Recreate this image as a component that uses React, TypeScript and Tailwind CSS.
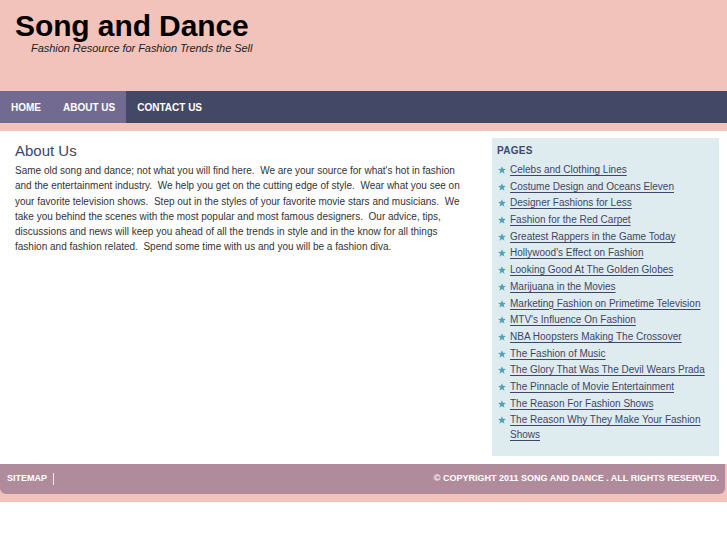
import React from 'react';

const pages = [
  'Celebs and Clothing Lines',
  'Costume Design and Oceans Eleven',
  'Designer Fashions for Less',
  'Fashion for the Red Carpet',
  'Greatest Rappers in the Game Today',
  "Hollywood's Effect on Fashion",
  'Looking Good At The Golden Globes',
  'Marijuana in the Movies',
  'Marketing Fashion on Primetime Television',
  "MTV's Influence On Fashion",
  'NBA Hoopsters Making The Crossover',
  'The Fashion of Music',
  'The Glory That Was The Devil Wears Prada',
  'The Pinnacle of Movie Entertainment',
  'The Reason For Fashion Shows',
  'The Reason Why They Make Your Fashion Shows',
];

const about =
  "Same old song and dance; not what you will find here.\u00a0 We are your source for what's hot in fashion and the entertainment industry.\u00a0 We help you get on the cutting edge of style.\u00a0 Wear what you see on your favorite television shows.\u00a0 Step out in the styles of your favorite movie stars and musicians.\u00a0 We take you behind the scenes with the most popular and most famous designers.\u00a0 Our advice, tips, discussions and news will keep you ahead of all the trends in style and in the know for all things fashion and fashion related.\u00a0 Spend some time with us and you will be a fashion diva.";

function Star() {
  return (
    <svg width="8" height="8" viewBox="0 0 10 10" className="shrink-0 mt-[4px]">
      <path d="M5 0.2 L6.3 3.5 L9.9 3.6 L7.1 5.9 L8.1 9.6 L5 7.5 L1.9 9.6 L2.9 5.9 L0.1 3.6 L3.7 3.5 Z" fill="#4fa3b7" />
    </svg>
  );
}

export default function App() {
  return (
    <div className="w-[727px] min-h-[545px] bg-white font-['Liberation_Sans',Arial,sans-serif]">
      {/* header */}
      <header className="h-[91px] bg-[#f2c3bb] pt-[11px]">
        <h1 className="pl-[15px] text-[30px] leading-none font-bold text-black tracking-[-0.1px]">Song and Dance</h1>
        <p className="pl-[31px] mt-[2px] text-[11px] leading-none italic text-[#222] tracking-[-0.05px]">
          Fashion Resource for Fashion Trends the Sell
        </p>
      </header>

      {/* nav */}
      <nav className="h-[32px] bg-[#434867] flex text-[10px] font-bold text-white">
        <div className="flex bg-[#736a91]">
          <a className="px-[11px] flex items-center">HOME</a>
          <a className="px-[11px] flex items-center">ABOUT US</a>
        </div>
        <a className="px-[11px] flex items-center">CONTACT US</a>
      </nav>
      <div className="h-[8px] bg-[#f2c3bb]" />

      {/* main */}
      <main className="h-[333px] flex">
        <section className="w-[455px] ml-[15px] pt-[11px]">
          <h2 className="text-[15px] leading-[18px] text-[#3e4466]">About Us</h2>
          <p className="mt-[3px] text-[10px] leading-[15.3px] text-[#333]">{about}</p>
        </section>
        <aside className="w-[227px] ml-[22px] mt-[7px] mb-[8px] bg-[#deecf0] pl-[5px] pr-[6px] pt-[7px]">
          <h3 className="text-[10px] leading-[12px] font-bold text-[#444866] tracking-[0.3px]">PAGES</h3>
          <ul className="mt-[5px]">
            {pages.map((p) => (
              <li key={p} className="flex gap-[4px] pl-[1px] mb-[1.7px] text-[10px] leading-[15px]">
                <Star />
                <a className="text-[#3f4566] underline underline-offset-[2px]">{p}</a>
              </li>
            ))}
          </ul>
        </aside>
      </main>

      {/* footer */}
      <footer className="bg-[#f2c3bb] pb-[8px]">
        <div className="h-[30px] mr-[2px] bg-[#b08b9c] rounded-b-[6px] flex items-center justify-between pl-[7px] pr-[6px] text-[9px] font-bold text-white">
          <div className="flex items-center">
            <span>SITEMAP</span>
            <span className="ml-[6px] w-px h-[12px] bg-[#f4e8ec]" />
          </div>
          <span>© COPYRIGHT 2011 SONG AND DANCE . ALL RIGHTS RESERVED.</span>
        </div>
      </footer>
    </div>
  );
}
